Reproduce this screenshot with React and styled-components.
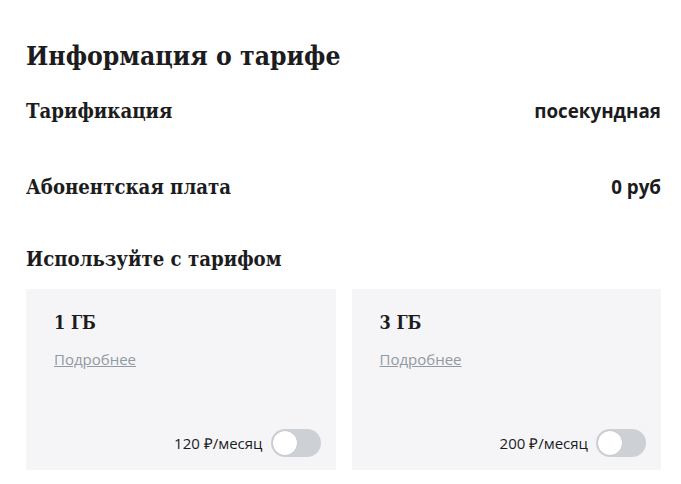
import React from 'react';
import styled, { createGlobalStyle } from 'styled-components';

const GlobalStyle = createGlobalStyle`
  html, body {
    margin: 0;
    padding: 0;
    background: #ffffff;
  }
`;

const Page = styled.div`
  width: 681px;
  height: 484px;
  box-sizing: border-box;
  padding: 38px 20px 0 26px;
  color: #1c1c1e;
`;

const Title = styled.h2`
  margin: 0;
  font-family: "DejaVu Serif Condensed", "DejaVu Serif", serif;
  font-weight: 700;
  font-size: 26.3px;
  line-height: 36px;
`;

const Row = styled.div`
  display: flex;
  justify-content: space-between;
  align-items: center;
  height: ${({ $h }) => $h}px;
`;

const Label = styled.span`
  font-family: "DejaVu Serif Condensed", "DejaVu Serif", serif;
  font-weight: 700;
  font-size: 20.2px;
`;

const Value = styled.span`
  font-family: "Open Sans", sans-serif;
  font-weight: 700;
  font-size: 18.8px;
`;

const Subtitle = styled.h3`
  margin: 11px 0 0;
  font-family: "DejaVu Serif Condensed", "DejaVu Serif", serif;
  font-weight: 700;
  font-size: 20.2px;
  line-height: 44px;
`;

const Cards = styled.div`
  display: grid;
  grid-template-columns: 1fr 1fr;
  gap: 16px;
  margin-top: 8px;
`;

const Card = styled.div`
  height: 181px;
  box-sizing: border-box;
  background: #f5f5f8;
  padding: 22px 15px 13px 28px;
  display: flex;
  flex-direction: column;
`;

const CardTitle = styled.div`
  font-family: "DejaVu Serif Condensed", "DejaVu Serif", serif;
  font-weight: 700;
  font-size: 18px;
  line-height: 24px;
`;

const More = styled.a`
  margin-top: 14px;
  font-family: "Open Sans", sans-serif;
  font-size: 15px;
  color: #9299a2;
  text-decoration: underline;
  align-self: flex-start;
`;

const Footer = styled.div`
  margin-top: auto;
  display: flex;
  justify-content: flex-end;
  align-items: center;
  gap: 8px;
`;

const Price = styled.span`
  font-family: "Open Sans", sans-serif;
  font-size: 15px;
  color: #1c1c1e;
`;

const Toggle = styled.span`
  position: relative;
  width: 50px;
  height: 28px;
  border-radius: 14px;
  background: #cdd1d6;
  &::after {
    content: '';
    position: absolute;
    left: 2px;
    top: 2px;
    width: 24px;
    height: 24px;
    border-radius: 50%;
    background: #ffffff;
    box-shadow: 0 0 1px rgba(0, 0, 0, 0.2);
  }
`;

const options = [
  { title: '1 ГБ', price: '120 ₽/месяц' },
  { title: '3 ГБ', price: '200 ₽/месяц' },
];

export default function App() {
  return (
    <Page>
      <GlobalStyle />
      <Title>Информация о тарифе</Title>
      <Row $h={74}>
        <Label>Тарификация</Label>
        <Value>посекундная</Value>
      </Row>
      <Row $h={78}>
        <Label>Абонентская плата</Label>
        <Value>0 руб</Value>
      </Row>
      <Subtitle>Используйте с тарифом</Subtitle>
      <Cards>
        {options.map((o) => (
          <Card key={o.title}>
            <CardTitle>{o.title}</CardTitle>
            <More href="#">Подробнее</More>
            <Footer>
              <Price>{o.price}</Price>
              <Toggle />
            </Footer>
          </Card>
        ))}
      </Cards>
    </Page>
  );
}
